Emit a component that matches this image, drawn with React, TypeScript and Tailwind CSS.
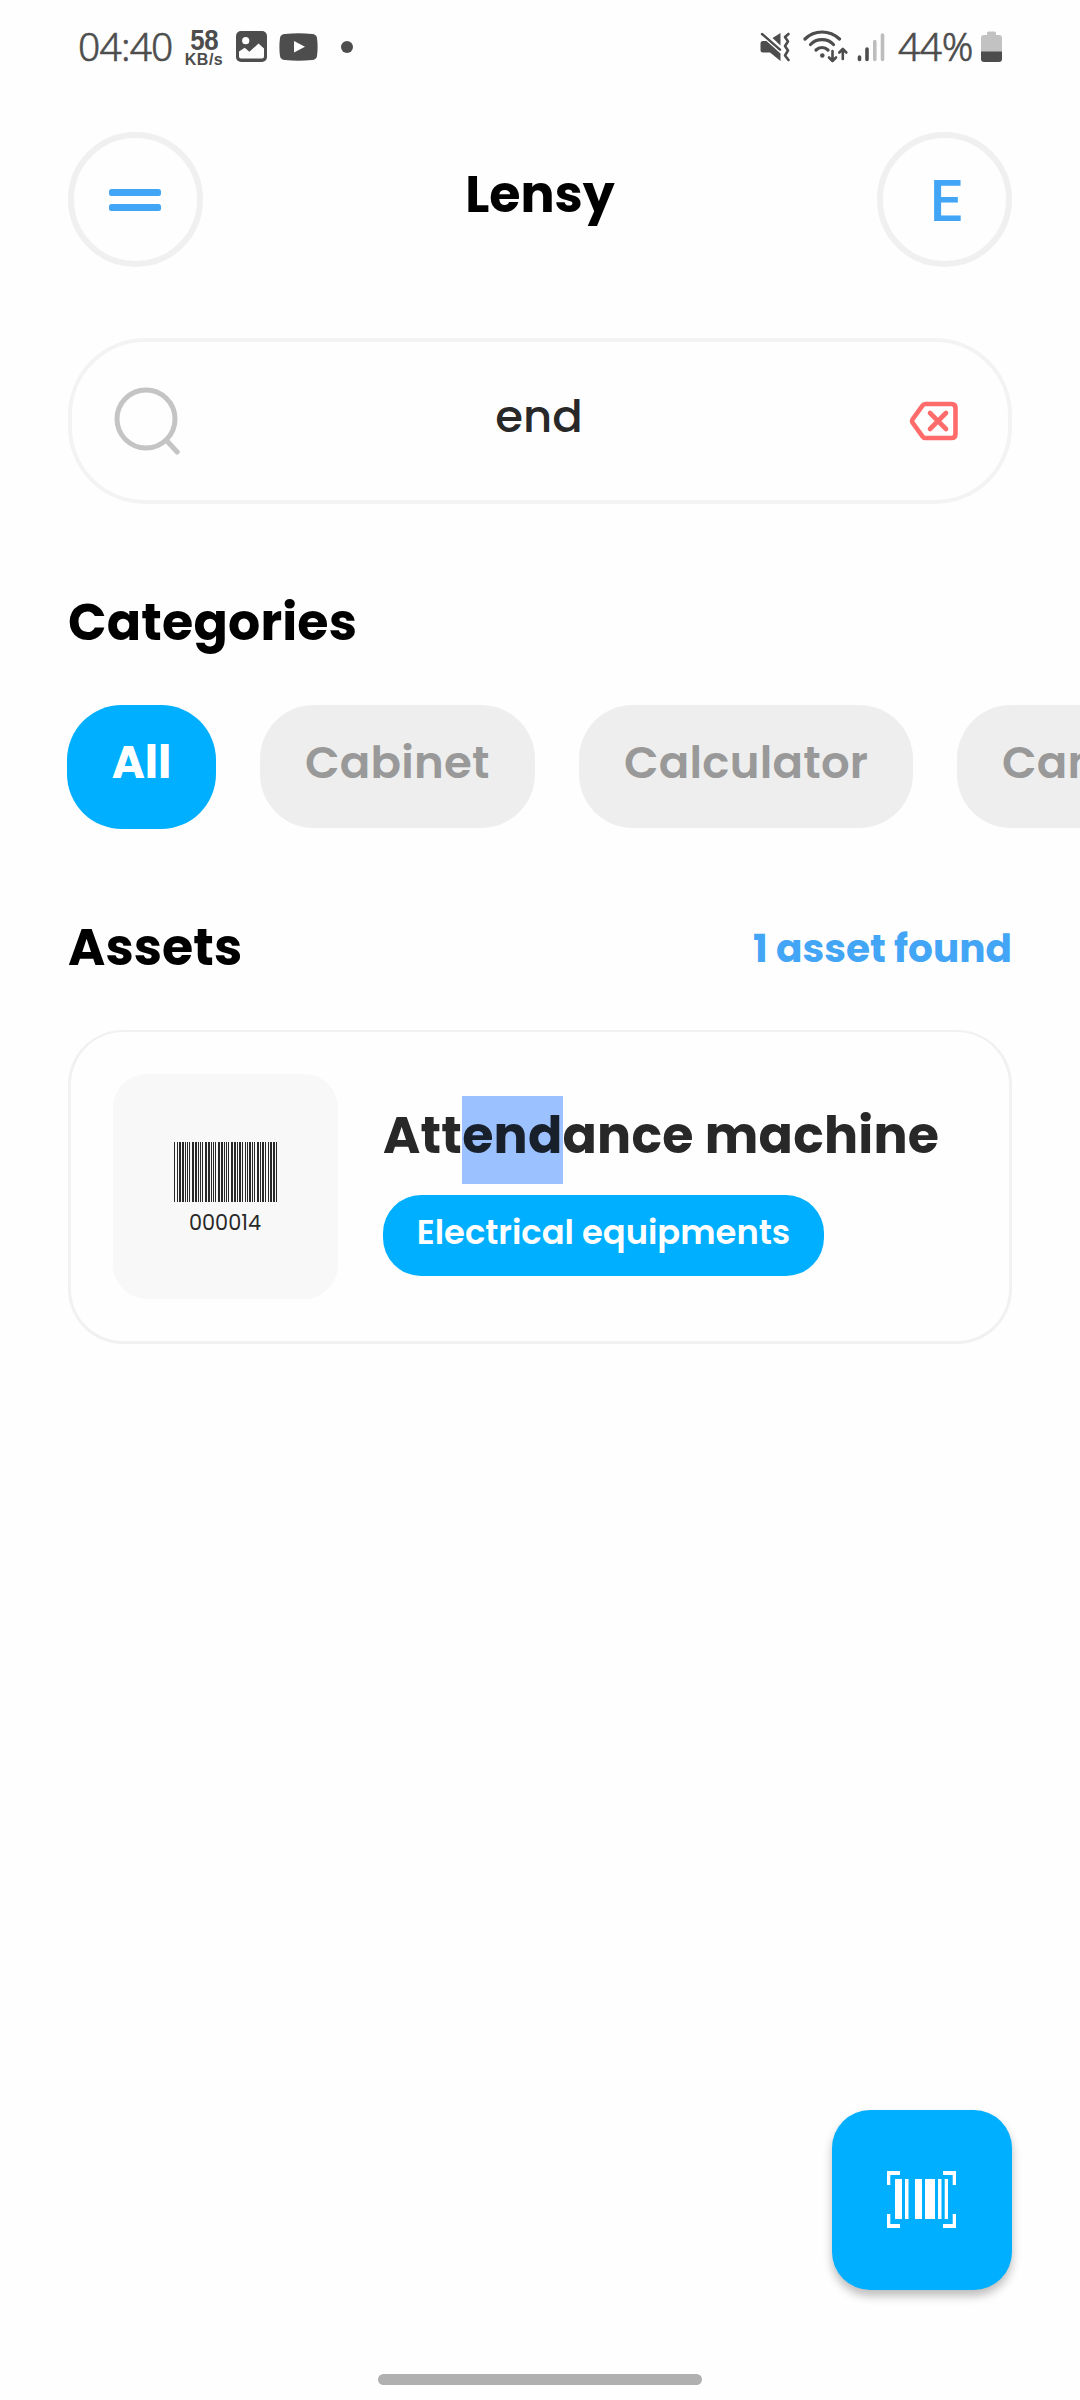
const CODE39: Record<string, string> = {
  "*": "nwnnwnwnn",
  "0": "nnnwwnwnn",
  "1": "wnnwnnnnw",
  "4": "nnnwwnnnw",
};

/** Code 39 barcode, one unit per narrow module. */
function Barcode({ value }: { value: string }) {
  const bars: { x: number; w: number }[] = [];
  let x = 0;
  for (const ch of `*${value}*`) {
    [...CODE39[ch]].forEach((k, i) => {
      const w = k === "w" ? 2 : 1;
      if (i % 2 === 0) bars.push({ x, w });
      x += w;
    });
    x += 1;
  }
  return (
    <svg className="-ml-px" width={x - 1} height="60" viewBox={`0 0 ${x - 1} 60`} shapeRendering="crispEdges" fill="#282828">
      {bars.map((b) => (
        <rect key={b.x} x={b.x} y="0" width={b.w} height="60" />
      ))}
    </svg>
  );
}

function StatusBar() {
  return (
    <div className="flex h-[93px] justify-between pl-[78px] pr-[78px] text-[#4d4d4d]">
      <div className="flex items-center">
        <span className="w-[107px] font-['Noto_Sans',sans-serif] text-[39px] leading-[60px] font-light tracking-[-0.8px] -mt-[2px] [-webkit-text-stroke:0.6px_#4d4d4d]">
          04:40
        </span>
        <div className="flex w-[38px] flex-col items-center font-['Liberation_Sans',Arial,sans-serif] font-bold">
          <span className="h-[25px] scale-x-[0.86] text-[30px] leading-[26px] tracking-[-0.4px]">58</span>
          <span className="mt-[1px] h-[14px] text-[16px] leading-[14px] tracking-[0.5px]">KB/s</span>
        </div>
        <svg className="ml-[13px]" width="31" height="31" viewBox="0 0 31 31">
          <rect width="31" height="31" rx="5" fill="#4d4d4d" />
          <circle cx="9.7" cy="9.7" r="3.6" fill="#fefefe" />
          <path d="M3 20.5 L8.7 16.8 L13.4 20.8 L22.5 12.6 L28 17.5 V25.5 Q28 27.5 26 27.5 H5 Q3 27.5 3 25.5 Z" fill="#fefefe" />
        </svg>
        <svg className="ml-[12px]" width="39" height="28" viewBox="0 0 39 28">
          <path d="M6 1 Q19.500 -0.500 33 1 Q37.500 1.300 38 5 Q39.200 14 38 23 Q37.500 26.700 33 27 Q19.500 28.300 6 27 Q1.500 26.700 1 23 Q-0.200 14 1 5 Q1.500 1.300 6 1 Z" fill="#4d4d4d" />
          <path d="M15 8 L26 13.800 L15 19.500 Z" fill="#fefefe" />
        </svg>
        <span className="ml-[23px] size-3 rounded-full bg-[#4d4d4d]" />
      </div>
      <div className="flex items-center">
        <svg width="31" height="30" viewBox="0 0 31 30">
          <path d="M0.500 11.500 Q0.500 9 3 9 H6.500 L20.500 21.500 V29 L10 20.500 H3 Q0.500 20.500 0.500 18 Z" fill="#4d4d4d" />
          <path d="M12.500 6 L20.500 1 V13.500 Z" fill="#4d4d4d" />
          <path d="M2 2 L20 17.700" stroke="#4d4d4d" strokeWidth="2.400" strokeLinecap="round" />
          <path d="M28.500 2 L25 5 L28 9.500 L25 14 L28 18.500 L25 23.500 L28.500 28" fill="none" stroke="#4d4d4d" strokeWidth="2.600" strokeLinecap="round" strokeLinejoin="round" />
        </svg>
        <svg className="ml-[12px]" width="46" height="33" viewBox="0 0 46 33" fill="none" stroke="#4d4d4d" strokeWidth="3.200" strokeLinecap="round" strokeLinejoin="round">
          <path d="M2 9 Q9 2 19 2 Q29 2 36.500 9" />
          <path d="M7.500 14.500 Q12 9.700 19 9.700 Q26 9.700 30.500 14.500" />
          <path d="M13 20 Q15.500 17.500 19 17.500 Q22.500 17.500 25 20" />
          <circle cx="19.300" cy="25.500" r="2.300" fill="#4d4d4d" stroke="none" />
          <path d="M29.500 21 V31 M26 27.500 L29.500 31 L33 27.500 M39.800 29 V19 M36.300 22.500 L39.800 19 L43.300 22.500" strokeWidth="2.600" />
        </svg>
        <svg className="ml-[8px]" width="28" height="30" viewBox="0 0 28 30" strokeWidth="3.600" strokeLinecap="round">
          <path d="M2.500 25 V27.500 M10 17 V27.500" stroke="#4d4d4d" />
          <path d="M17.800 9.500 V27.500 M25.500 3 V27.500" stroke="#bdbdbd" />
        </svg>
        <span className="ml-[13px] w-[78px] font-['Noto_Sans',sans-serif] text-[39px] leading-[60px] font-light tracking-[-0.4px] -mt-[2px] [-webkit-text-stroke:0.6px_#4d4d4d]">
          44%
        </span>
        <svg className="ml-[5px]" width="21" height="32" viewBox="0 0 21 32">
          <path d="M6 2 Q6 0.500 7.500 0.500 H13.500 Q15 0.500 15 2 V4 H18 Q21 4 21 7 V21 H0 V7 Q0 4 3 4 H6 Z" fill="#c2c2c2" />
          <path d="M0 20.500 H21 V28 Q21 31 18 31 H3 Q0 31 0 28 Z" fill="#4d4d4d" />
        </svg>
      </div>
    </div>
  );
}

function Header() {
  return (
    <header className="mt-[39px] flex h-[135px] items-center justify-between px-[68px]">
      <button className="flex size-[135px] flex-col items-center justify-center gap-2 rounded-full border-[6px] border-[#f0f0f0] pt-[1px] pr-[1px]">
        <span className="h-[7px] w-[52px] rounded-[2.500px] bg-[#42a5f5]" />
        <span className="h-[7px] w-[52px] rounded-[2.500px] bg-[#42a5f5]" />
      </button>
      <h1 className="mb-[9px] text-[50.6px] leading-[76px] font-bold text-black">Lensy</h1>
      <button className="flex size-[135px] items-center justify-center rounded-full border-[6px] border-[#f0f0f0] pt-[4px] pl-[3px] font-[Roboto,sans-serif] text-[57px] leading-[66px] font-medium text-[#42a5f5]">
        E
      </button>
    </header>
  );
}

function SearchBox() {
  return (
    <div className="mx-[68px] mt-[71px] flex h-[166px] items-center justify-between rounded-[77px] border-[4px] border-[#f3f3f3] pr-[49px] pl-[42px]">
      <svg width="66" height="68" viewBox="0 0 66 68" fill="none" stroke="#c4c4c4" strokeWidth="5" strokeLinecap="round">
        <circle cx="32" cy="32" r="29" />
        <path d="M52.500 53.500 L63.200 65" />
      </svg>
      <span className="mb-[9px] -ml-[11px] text-[45px] leading-[68px] font-medium text-[#282828]">end</span>
      <svg width="50" height="40" viewBox="0 0 50 40" fill="none" stroke="#ff6b6b" strokeWidth="4.600" strokeLinecap="round" strokeLinejoin="round">
        <path d="M16.500 3 H42.500 Q46.500 3 46.500 7 V33 Q46.500 37 42.500 37 H16.500 Q14.500 37 13.300 35.200 L3.800 22 Q2.400 20 3.800 18 L13.300 4.800 Q14.500 3 16.500 3 Z" />
        <path d="M21 12 L37 28 M37 12 L21 28" />
      </svg>
    </div>
  );
}

function Chip({ label, width }: { label: string; width: string }) {
  return (
    <button className={`h-[123px] shrink-0 rounded-[54px] bg-[#eeeeee] pl-[45px] text-left text-[45px] leading-[68px] font-semibold tracking-[0.25px] text-[#999999] ${width}`}>
      <span className="mb-[7px] block">{label}</span>
    </button>
  );
}

function Categories() {
  return (
    <section>
      <h2 className="mt-[81px] px-[68px] text-[50.6px] leading-[76px] font-bold tracking-[0.2px] text-black">Categories</h2>
      <div className="mt-[44px] flex h-[124px] items-start gap-[44px] overflow-hidden pl-[67px]">
        <button className="h-[124px] w-[149px] shrink-0 rounded-[55px] bg-[#00afff] text-[45px] leading-[68px] font-bold text-white">
          <span className="mb-[8px] block">All</span>
        </button>
        <Chip label="Cabinet" width="w-[275px]" />
        <Chip label="Calculator" width="w-[334px]" />
        <Chip label="Camera" width="w-[275px]" />
      </div>
    </section>
  );
}

function AssetCard() {
  return (
    <article className="mx-[68px] mt-[43px] flex h-[314px] items-start gap-[45px] rounded-[55px] border-[3px] border-t-2 border-[#f1f1f1] pt-[42px] pl-[42px]">
      <div className="flex size-[225px] shrink-0 flex-col items-center rounded-[34px] bg-[#f8f8f8] pt-[68px]">
        <Barcode value="000014" />
        <span className="mt-[6px] -ml-px text-[20.8px] leading-[30px] text-[#282828]">000014</span>
      </div>
      <div className="flex flex-col items-start pt-[23px]">
        <h3 className="text-[50.6px] leading-[78px] font-bold tracking-[0.25px] whitespace-nowrap text-[#282828]">
          Att<span className="bg-[#9cc1ff] pt-[4px] pb-[13px] text-[#17202b]">end</span>ance machine
        </h3>
        <span className="mt-[20px] flex h-[81px] w-[441px] justify-center rounded-[38px] bg-[#00afff] text-[33.75px] leading-[76px] font-semibold whitespace-nowrap text-white">
          Electrical equipments
        </span>
      </div>
    </article>
  );
}

function ScanButton() {
  return (
    <button className="absolute top-[2110px] right-[68px] flex size-[180px] items-center justify-center rounded-[38px] bg-[#00afff] shadow-[0_6px_10px_rgba(0,0,0,0.26)]">
      <svg className="mr-[1px] mb-[1px]" width="69" height="57" viewBox="0 0 69 57" fill="#fff">
        <path d="M0 0 H13 V4 H3.300 V14 H0 Z M56 0 H69 V14 H65.700 V4 H56 Z M0 43 H3.300 V53 H13 V57 H0 Z M65.700 43 H69 V57 H56 V53 H65.700 Z" />
        <path d="M8 8 H15 V48 H8 Z M18 8 H21.500 V48 H18 Z M28 8 H35 V48 H28 Z M38 8 H48 V48 H38 Z M51 8 H54.500 V48 H51 Z M57.700 8 H61 V48 H57.700 Z" />
      </svg>
    </button>
  );
}

export default function App() {
  return (
    <div className="relative h-[2400px] w-[1080px] overflow-hidden bg-[#fefefe] font-[Poppins,Inter,sans-serif]">
      <StatusBar />
      <Header />
      <SearchBox />
      <Categories />
      <section>
        <div className="mt-[80px] flex items-center justify-between px-[68px]">
          <h2 className="text-[50.6px] leading-[76px] font-bold tracking-[0.1px] text-black">Assets</h2>
          <span className="mt-[2px] text-[39px] leading-[76px] font-bold text-[#42a5f5]">1 asset found</span>
        </div>
        <AssetCard />
      </section>
      <ScanButton />
      <div className="absolute bottom-[15px] left-[378px] h-[11px] w-[324px] rounded-full bg-[#b0b0b0]" />
    </div>
  );
}
